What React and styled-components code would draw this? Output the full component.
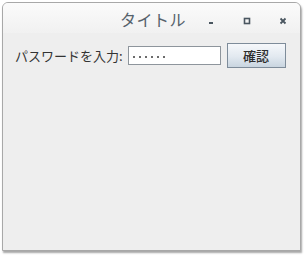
import React from "react";
import styled, { createGlobalStyle } from "styled-components";

const GlobalStyle = createGlobalStyle`
  html, body {
    margin: 0;
    padding: 0;
    background: #ffffff;
  }
  body {
    font-family: "Noto Sans CJK JP", "DejaVu Sans", sans-serif;
  }
`;

const Page = styled.div`
  width: 304px;
  height: 255px;
  padding: 2px 3px 4px 2px;
  box-sizing: border-box;
  display: flex;
`;

const Window = styled.div`
  flex: 1;
  display: flex;
  flex-direction: column;
  background: #eeeeee;
  border: 1px solid #a8a8a8;
  border-radius: 6px 6px 0 0;
  box-shadow: 1px 2px 2px rgba(0, 0, 0, 0.35);
  overflow: hidden;
`;

const TitleBar = styled.div`
  height: 30px;
  display: flex;
  align-items: center;
  position: relative;
  background: linear-gradient(#fbfbfb, #f1f1f1);
`;

const Title = styled.div`
  position: absolute;
  left: 117px;
  top: 4px;
  font-size: 16px;
  letter-spacing: 0.5px;
  color: #56626c;
`;

const Controls = styled.div`
  margin-left: auto;
  display: flex;
  align-items: center;
  gap: 26px;
  padding-right: 12px;
  padding-top: 5px;
`;

const Ctrl = styled.div`
  width: 10px;
  height: 10px;
  display: flex;
  align-items: center;
  justify-content: center;
`;

const Content = styled.div`
  display: flex;
  align-items: center;
  padding: 10px 0 0 12px;
`;

const Label = styled.span`
  font-size: 13px;
  color: #333333;
  margin-right: 5px;
`;

const Field = styled.div`
  width: 87px;
  height: 17px;
  border: 1px solid #8e959c;
  background: #ffffff;
  display: flex;
  align-items: center;
  gap: 4px;
  padding-left: 4px;
  box-sizing: content-box;
`;

const Dot = styled.span`
  width: 2px;
  height: 2px;
  border-radius: 1px;
  background: #3a3a3a;
  margin-top: 2px;
`;

const Button = styled.div`
  margin-left: 6px;
  width: 57px;
  height: 23px;
  border: 1px solid #7e8c9a;
  background: linear-gradient(#f6f8fb, #e2e9f0 55%, #c9d5e0);
  display: flex;
  align-items: center;
  justify-content: center;
  font-size: 13px;
  font-weight: 500;
  color: #2e2e2e;
`;

export default function App() {
  return (
    <>
      <GlobalStyle />
      <Page>
        <Window>
          <TitleBar>
            <Title>タイトル</Title>
            <Controls>
              <Ctrl>
                <svg width="10" height="10" viewBox="0 0 10 10">
                  <rect x="3" y="6" width="4" height="2" fill="#4a5660" />
                </svg>
              </Ctrl>
              <Ctrl>
                <svg width="10" height="10" viewBox="0 0 10 10">
                  <rect x="2.5" y="2.5" width="5" height="5" fill="none" stroke="#4a5660" strokeWidth="1.6" />
                </svg>
              </Ctrl>
              <Ctrl>
                <svg width="10" height="10" viewBox="0 0 10 10">
                  <path d="M2.5 2.5 L7.5 7.5 M7.5 2.5 L2.5 7.5" stroke="#4a5660" strokeWidth="1.8" />
                </svg>
              </Ctrl>
            </Controls>
          </TitleBar>
          <Content>
            <Label>パスワードを入力:</Label>
            <Field>
              {Array.from({ length: 6 }).map((_, i) => (
                <Dot key={i} />
              ))}
            </Field>
            <Button>確認</Button>
          </Content>
        </Window>
      </Page>
    </>
  );
}
